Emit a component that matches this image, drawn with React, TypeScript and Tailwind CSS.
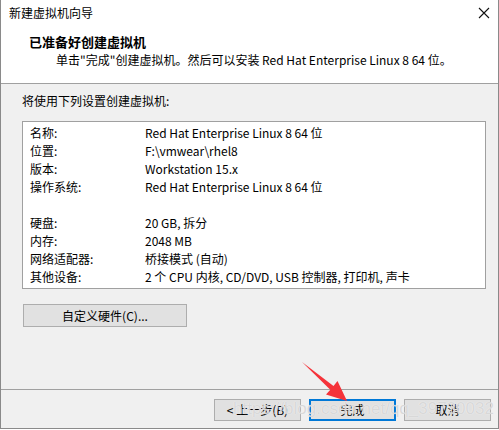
import React from 'react';

const rows: [string, string][] = [
  ['名称:', 'Red Hat Enterprise Linux 8 64 位'],
  ['位置:', 'F:\\vmwear\\rhel8'],
  ['版本:', 'Workstation 15.x'],
  ['操作系统:', 'Red Hat Enterprise Linux 8 64 位'],
  ['', ''],
  ['硬盘:', '20 GB, 拆分'],
  ['内存:', '2048 MB'],
  ['网络适配器:', '桥接模式 (自动)'],
  ['其他设备:', '2 个 CPU 内核, CD/DVD, USB 控制器, 打印机, 声卡'],
];

const WinButton: React.FC<{ label: string; primary?: boolean }> = ({ label, primary }) => (
  <div
    className={`w-[87px] h-[22px] flex items-center justify-center bg-[#e1e1e1] text-[12px] ${
      primary ? 'border-2 border-[#0078d7]' : 'border border-[#adadad]'
    }`}
  >
    {label}
  </div>
);

export default function App() {
  return (
    <div className="relative w-[499px] h-[429px] flex flex-col bg-[#f0f0f0] border-l border-r border-b border-[#8a8a8a] text-black text-[12px] leading-[18px] font-['Noto_Sans_CJK_SC',sans-serif]">
      {/* header */}
      <div className="bg-white border-b border-[#a0a0a0] h-[84px] flex flex-col">
        <div className="h-[26px] flex items-center justify-between pl-2 pr-[4px]">
          <span>新建虚拟机向导</span>
          <svg width="12" height="12" viewBox="0 0 12 12" className="mr-[4px] mb-[1px]">
            <path d="M1 1 L11 11 M11 1 L1 11" stroke="#111" strokeWidth="1.1" />
          </svg>
        </div>
        <div className="pl-[28px] mt-[7px] font-bold text-[13px]">已准备好创建虚拟机</div>
        <div className="pl-[55px]">单击"完成"创建虚拟机。然后可以安装 Red Hat Enterprise Linux 8 64 位。</div>
      </div>

      {/* body */}
      <div className="flex flex-col pl-[21px] pt-[8px]">
        <div>将使用下列设置创建虚拟机:</div>
        <div className="mt-[11px] w-[464px] h-[168px] bg-white border border-[#a0a0a0] pt-[2px] pl-[7px]">
          {rows.map(([k, v], i) => (
            <div key={i} className="flex h-[18px]">
              <span className="w-[115px]">{k}</span>
              <span>{v}</span>
            </div>
          ))}
        </div>
        <div className="mt-[15px] ml-[1px] w-[164px] h-[23px] flex items-center justify-center bg-[#e1e1e1] border border-[#adadad]">
          自定义硬件(C)...
        </div>
      </div>

      {/* footer */}
      <div className="mt-auto border-t border-[#a0a0a0] pt-[9px] pb-[7px] pr-[7px] flex justify-end gap-[8px]">
        <WinButton label="< 上一步(B)" />
        <WinButton label="完成" primary />
        <WinButton label="取消" />
      </div>

      {/* watermark */}
      <div className="absolute left-[232px] top-[397px] text-[17px] leading-[24px] text-[#cfcfcf]/80 font-['Liberation_Sans',sans-serif] [text-shadow:0_0_1px_#ffffff] pointer-events-none">
        https://blog.csdn.net/qq_39730032
      </div>

      {/* red arrow */}
      <svg className="absolute left-0 top-0 pointer-events-none" width="499" height="430">
        <polygon
          points="301,362 332.5,386 336.5,381 346,401 325,394.5 329.3,389.8"
          fill="#f5333a"
        />
      </svg>
    </div>
  );
}
